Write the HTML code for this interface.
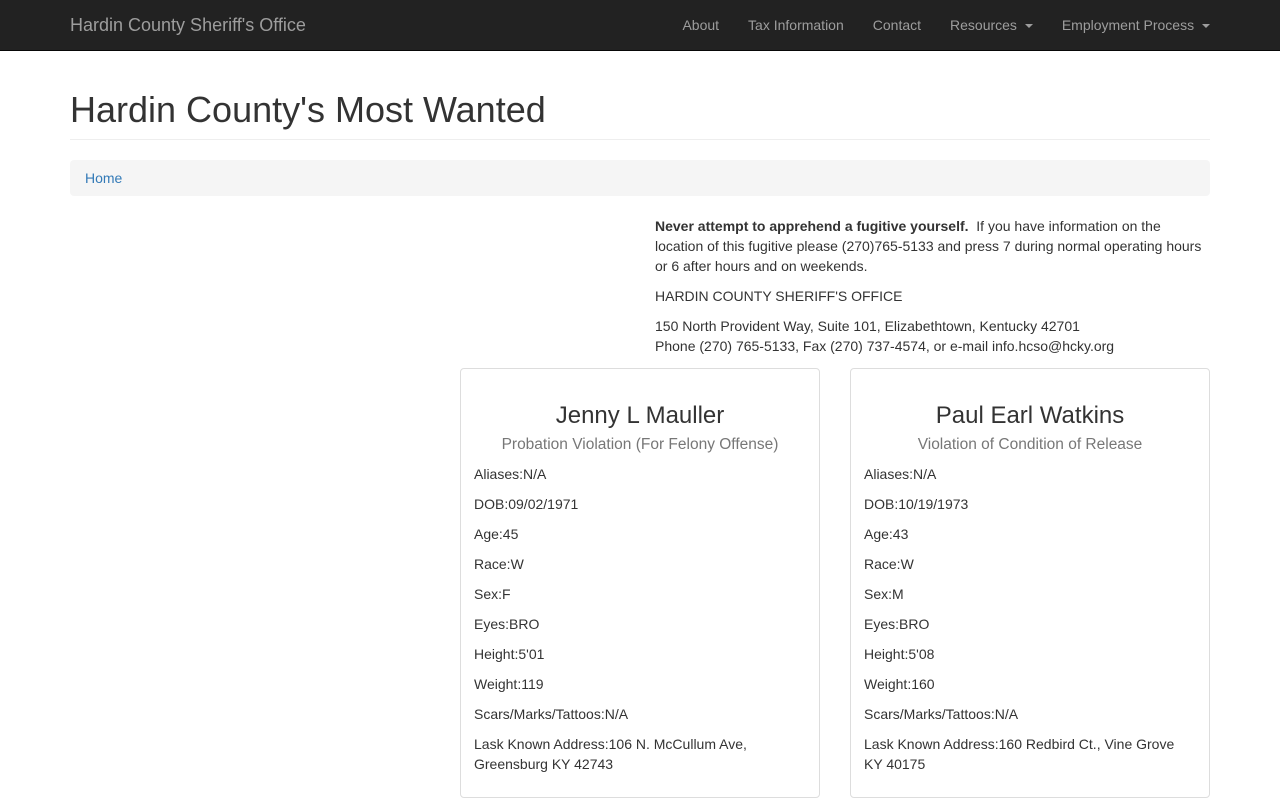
<!DOCTYPE html>
<html><head><meta charset="utf-8"><style>
*{box-sizing:border-box}
body{margin:0;font-family:"Liberation Sans",Arial,sans-serif;font-size:14px;line-height:20px;color:#333;background:#fff}
.nav{height:51px;background:#222;border-bottom:1px solid #080808}
.nav .c{width:1140px;margin:0 auto;position:relative;height:50px}
.brand{position:absolute;left:0;top:15px;font-size:18px;color:#9d9d9d;line-height:20px}
.menu{position:absolute;right:0;top:15px;display:flex;color:#9d9d9d;font-size:14px}
.menu span{margin-left:29px}
.caret{display:inline-block;width:0;height:0;border-top:4px solid #9d9d9d;border-left:4px solid transparent;border-right:4px solid transparent;vertical-align:middle;margin-left:4px}
.wrap{width:1140px;position:absolute;top:0;left:70px}
h1{font-size:36px;font-weight:400;margin:0;position:absolute;top:90px;left:0;line-height:40px}
.hr{position:absolute;top:139px;left:0;width:1140px;border-top:1px solid #eee}
.bc{position:absolute;top:160px;left:0;width:1140px;height:36px;background:#f5f5f5;border-radius:4px;padding:8px 15px;color:#337ab7}
.info{position:absolute;left:585px;top:216px;width:550px}
.info p{margin:0 0 10px}
.card{position:absolute;top:368px;width:360px;height:430px;border:1px solid #ddd;border-radius:4px;padding:0 13px}
.card h2{font-size:24px;font-weight:400;text-align:center;margin:33px 0 0;line-height:28px}
.card h3{font-size:15.5px;font-weight:400;color:#777;text-align:center;margin:5px 0 9px;line-height:20px}
.card p{margin:0 0 10px}
</style></head><body>
<div class="nav"><div class="c"><div class="brand">Hardin County Sheriff's Office</div>
<div class="menu"><span>About</span><span>Tax Information</span><span>Contact</span><span>Resources <i class="caret"></i></span><span>Employment Process <i class="caret"></i></span></div></div></div>
<div class="wrap">
<h1>Hardin County's Most Wanted</h1>
<div class="hr"></div>
<div class="bc">Home</div>
<div class="info">
<p><b>Never attempt to apprehend a fugitive yourself.</b>&nbsp; If you have information on the location of this fugitive please (270)765-5133 and press 7 during normal operating hours or 6 after hours and on weekends.</p>
<p>HARDIN COUNTY SHERIFF'S OFFICE</p>
<p>150 North Provident Way, Suite 101, Elizabethtown, Kentucky 42701<br>Phone (270) 765-5133, Fax (270) 737-4574, or e-mail info.hcso@hcky.org</p>
</div>
<div class="card" style="left:390px"><h2>Jenny L Mauller</h2><h3>Probation Violation (For Felony Offense)</h3>
<p>Aliases:N/A</p><p>DOB:09/02/1971</p><p>Age:45</p><p>Race:W</p><p>Sex:F</p><p>Eyes:BRO</p><p>Height:5'01</p><p>Weight:119</p><p>Scars/Marks/Tattoos:N/A</p><p>Lask Known Address:106 N. McCullum Ave, Greensburg KY 42743</p></div>
<div class="card" style="left:780px"><h2>Paul Earl Watkins</h2><h3>Violation of Condition of Release</h3>
<p>Aliases:N/A</p><p>DOB:10/19/1973</p><p>Age:43</p><p>Race:W</p><p>Sex:M</p><p>Eyes:BRO</p><p>Height:5'08</p><p>Weight:160</p><p>Scars/Marks/Tattoos:N/A</p><p>Lask Known Address:160 Redbird Ct., Vine Grove KY 40175</p></div>
</div>
</body></html>
